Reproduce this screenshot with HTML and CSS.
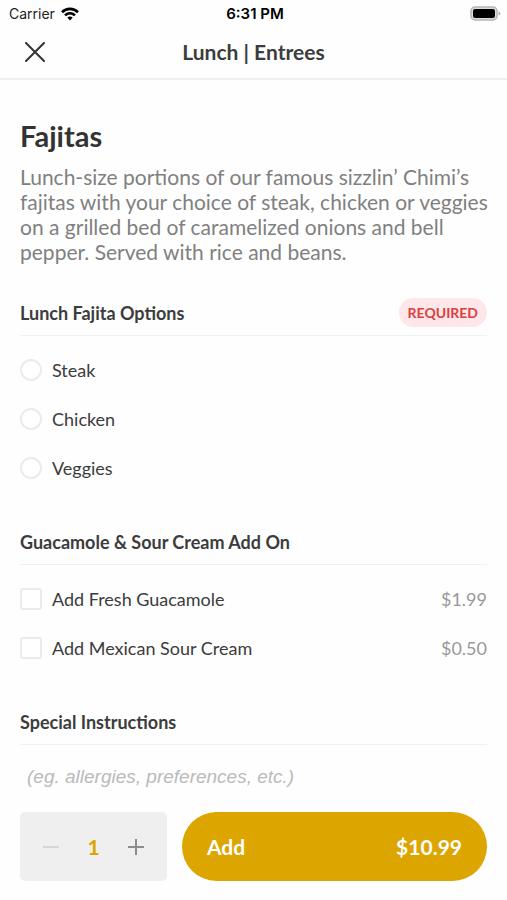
FILE: index.html
```html
<!DOCTYPE html>
<html lang="en">
<head>
	<title>Lunch | Entrees</title>
	<meta charset="utf-8">
	<meta name="viewport" content="width=device-width, initial-scale=1">

	<link rel="stylesheet" href="styles.css">
</head>

<body>
	<div class="status-bar">
		<div class="carrier">
			<span>Carrier</span>
			<svg width="18" height="14" viewBox="0 0 18 14" fill="none" stroke="#000" stroke-width="2.6">
				<path d="M1 5.2C5.500 .8 12.500 .8 17 5.200" />
				<path d="M4 8.400C6.900 5.700 11.100 5.700 14 8.400" />
				<path d="M6.300 10.600C7.900 9.200 10.100 9.200 11.700 10.600L9 13.400z" fill="#000" stroke="none" />
			</svg>
		</div>
		<span class="time">6:31 PM</span>
		<div class="battery">
			<svg width="31" height="15" viewBox="0 0 31 15">
				<rect x="1" y="1" width="26" height="13" rx="4" fill="#ddd" stroke="#b5b5b5" stroke-width="1.500" />
				<rect x="3" y="3" width="22" height="9" rx="2" fill="#000" />
				<path d="M28.500 5.500c2.500 .8 2.500 3.200 0 4z" fill="#b5b5b5" />
			</svg>
		</div>
	</div>

	<header class="header">
		<button class="close" aria-label="Close">
			<svg width="20" height="20" viewBox="0 0 20 20" fill="none" stroke="#333" stroke-width="2" stroke-linecap="round">
				<path d="M1 1l18 18M19 1L1 19" />
			</svg>
		</button>
		<h1>Lunch | Entrees</h1>
	</header>

	<main class="item">
		<h2>Fajitas</h2>
		<p class="description">Lunch-size portions of our famous sizzlin’ Chimi’s fajitas with your choice of steak, chicken or veggies on a grilled bed of caramelized onions and bell pepper. Served with rice and beans.</p>

		<section>
			<div class="section-head">
				<h3>Lunch Fajita Options</h3>
				<span class="required">REQUIRED</span>
			</div>
			<div class="options">
				<label><input type="radio" name="fajita" value="steak">Steak</label>
				<label><input type="radio" name="fajita" value="chicken">Chicken</label>
				<label><input type="radio" name="fajita" value="veggies">Veggies</label>
			</div>
		</section>

		<section>
			<div class="section-head">
				<h3>Guacamole &amp; Sour Cream Add On</h3>
			</div>
			<div class="options">
				<label><input type="checkbox" name="guacamole">Add Fresh Guacamole <span class="price">$1.99</span></label>
				<label><input type="checkbox" name="sour-cream">Add Mexican Sour Cream <span class="price">$0.50</span></label>
			</div>
		</section>

		<section>
			<div class="section-head">
				<h3><label for="instructions">Special Instructions</label></h3>
			</div>
			<textarea id="instructions" rows="1" placeholder="(eg. allergies, preferences, etc.)"></textarea>
		</section>
	</main>

	<footer class="footer">
		<div class="quantity">
			<button aria-label="Remove one" disabled>
				<svg width="16" height="16" viewBox="0 0 16 16" stroke="#d6d6d6" stroke-width="2">
					<path d="M0 8h16" />
				</svg>
			</button>
			<output>1</output>
			<button aria-label="Add one">
				<svg width="16" height="16" viewBox="0 0 16 16" stroke="#8c8c8c" stroke-width="2">
					<path d="M0 8h16M8 0v16" />
				</svg>
			</button>
		</div>
		<button class="add">
			<span>Add</span>
			<span>$10.99</span>
		</button>
	</footer>
</body>

</html>
```

FILE: styles.css
```css
* {
	box-sizing: border-box;
}
body {
	display: flex;
	flex-direction: column;
	min-height: 100vh;
	margin: 0;
	font-family: Lato, sans-serif;
	font-size: 18px;
	color: #3c3c3c;
	background: #fefefe;
}
h1, h2, h3, p {
	margin: 0;
}
button {
	padding: 0;
	border: 0;
	background: none;
	font-family: inherit;
	cursor: pointer;
}
svg {
	display: block;
}

.status-bar {
	display: grid;
	grid-template-columns: 1fr auto 1fr;
	align-items: center;
	height: 27px;
	padding: 0 6px 0 9px;
	font-family: Inter, sans-serif;
	font-size: 14px;
	color: #222;
}
.carrier {
	display: flex;
	align-items: center;
	gap: 6px;
}
.time {
	font-size: 15px;
	font-weight: 600;
	color: #000;
}
.battery {
	justify-self: end;
}

.header {
	display: grid;
	grid-template-columns: 30px 1fr 30px;
	align-items: center;
	height: 53px;
	padding: 0 20px 2px;
	border-bottom: 2px solid #efefef;
}
.close {
	display: flex;
	justify-content: center;
	padding: 5px 0;
}
.header h1 {
	font-size: 21px;
	font-weight: bold;
	text-align: center;
}

.item {
	flex: 1;
	padding: 38px 20px 0;
}
.item h2 {
	margin-bottom: 10px;
	font-size: 29px;
	line-height: 36px;
	color: #333;
}
.description {
	margin-right: -5px;
	font-size: 21px;
	line-height: 25px;
	color: #808080;
}
section {
	margin-top: 30px;
}
.section-head {
	display: flex;
	justify-content: space-between;
	align-items: center;
	height: 42px;
	padding-bottom: 4px;
	border-bottom: 1px solid #f0f0f0;
}
.section-head h3 {
	font-size: 18px;
}
.required {
	padding: 0 9px;
	border-radius: 15px;
	font-size: 14px;
	font-weight: bold;
	line-height: 29px;
	color: #d9403f;
	background: #ffe6e8;
}

.options {
	padding: 9px 0 1px;
}
.options label {
	display: flex;
	align-items: center;
	height: 49px;
}
.options input {
	appearance: none;
	width: 22px;
	height: 22px;
	margin: 0 10px 0 0;
	border: 2px solid #ebebeb;
	border-radius: 3px;
	background: #fff;
}
.options input[type="radio"] {
	border-radius: 50%;
}
.options input:checked {
	border-color: #dda500;
	background: #dda500;
}
.price {
	margin-left: auto;
	color: #999;
}
textarea {
	display: block;
	width: 100%;
	height: 48px;
	padding: 20px 7px 4px;
	border: 0;
	outline: 0;
	resize: none;
	font-family: "Liberation Sans", sans-serif;
	font-size: 19px;
	line-height: 24px;
	background: none;
}
textarea::placeholder {
	font-style: italic;
	color: #bababa;
}

.footer {
	position: sticky;
	bottom: 0;
	display: flex;
	gap: 15px;
	padding: 19px 20px;
	background: #fefefe;
}
.quantity {
	display: flex;
	justify-content: space-between;
	align-items: center;
	width: 147px;
	height: 69px;
	padding: 0 13px;
	border-radius: 5px;
	background: #efefef;
}
.quantity button {
	padding: 10px;
}
.quantity output {
	font-size: 21px;
	font-weight: bold;
	color: #dda500;
}
.add {
	display: flex;
	flex: 1;
	justify-content: space-between;
	align-items: center;
	padding: 0 25px;
	border-radius: 35px;
	font-size: 21px;
	font-weight: bold;
	color: #fff;
	background: #dda500;
}
```
